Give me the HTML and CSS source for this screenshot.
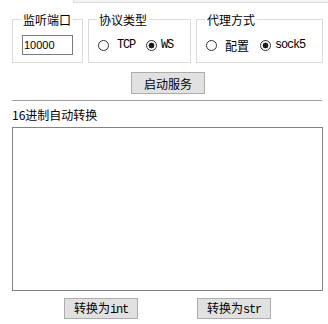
FILE: index.html
```html
<!DOCTYPE html>
<html lang="zh-CN">
<head>
<meta charset="utf-8">
<title>代理服务</title>
<link rel="stylesheet" href="styles.css">
</head>
<body>
<div class="topedge"></div>
<div class="groups">
  <fieldset class="group g1">
    <legend>监听端口</legend>
    <div class="row"><input class="port" type="text" value="10000"></div>
  </fieldset>
  <fieldset class="group g2">
    <legend>协议类型</legend>
    <div class="row">
      <label class="opt opt-a"><input type="radio" name="proto"><span class="mono">TCP</span></label>
      <label class="opt"><input type="radio" name="proto" checked><span class="mono">WS</span></label>
    </div>
  </fieldset>
  <fieldset class="group g3">
    <legend>代理方式</legend>
    <div class="row">
      <label class="opt opt-a"><input type="radio" name="mode"><span>配置</span></label>
      <label class="opt"><input type="radio" name="mode" checked><span class="mono">sock5</span></label>
    </div>
  </fieldset>
</div>
<div class="start-row"><button class="btn start">启动服务</button></div>
<hr class="sep">
<div class="label">16进制自动转换</div>
<textarea class="hex"></textarea>
<div class="actions">
  <button class="btn act">转换为<span class="mono">int</span></button>
  <button class="btn act">转换为<span class="mono">str</span></button>
</div>
</body>
</html>
```
FILE: styles.css
```css
html, body {
  margin: 0;
  padding: 0;
  background: #ffffff;
}
body {
  width: 328px;
  height: 324px;
  overflow: hidden;
  font-family: "Noto Sans CJK SC", "Liberation Sans", sans-serif;
  font-size: 12px;
  line-height: 15px;
  color: #000;
}
.mono {
  font-family: "Liberation Mono", "Noto Sans CJK SC", monospace;
  font-size: 12px;
  letter-spacing: -1.2px;
}
.topedge {
  margin-left: 73px;
  height: 2px;
  background: #f4f4f4;
  border-left: 1px solid #dcdcdc;
  border-bottom: 1px solid #dcdcdc;
}
.groups {
  display: flex;
  gap: 5px;
  margin-top: 9px;
  padding-left: 12px;
}
.group {
  margin: 0;
  min-width: 0;
  padding: 8px 4px 7px 9px;
  border: 1px solid #dcdcdc;
  box-sizing: border-box;
}
.g1 { width: 71px; }
.g2 { width: 103px; }
.g3 { width: 127px; }
.group legend {
  padding: 0 2px;
  margin-left: -1px;
  line-height: 15px;
  font-size: 12px;
}
.row {
  display: flex;
  align-items: center;
  gap: 11px;
  height: 20px;
}
.port {
  box-sizing: border-box;
  width: 51px;
  height: 20px;
  margin: 0;
  padding: 0 0 0 1px;
  border: 1px solid #7a7a7a;
  font-family: "Liberation Sans", sans-serif;
  font-size: 11px;
  color: #000;
  outline: none;
}
.opt {
  display: flex;
  align-items: center;
  gap: 4px;
  white-space: nowrap;
}
.opt-a { gap: 8px; }
.opt input {
  appearance: none;
  -webkit-appearance: none;
  box-sizing: border-box;
  width: 11px;
  height: 11px;
  margin: 0;
  border: 1px solid #333;
  border-radius: 50%;
  background: #fff;
}
.opt input:checked {
  background: radial-gradient(circle, #1a1a1a 0, #1a1a1a 2.6px, #fff 3.2px);
}
.btn {
  box-sizing: border-box;
  margin: 0;
  padding: 0;
  background: #e1e1e1;
  border: 1px solid #adadad;
  border-radius: 0;
  font-family: "Noto Sans CJK SC", sans-serif;
  font-size: 12px;
  line-height: 15px;
  color: #000;
}
.start-row {
  padding-left: 131px;
  margin-top: 9px;
  height: 22px;
}
.start {
  width: 74px;
  height: 22px;
}
.sep {
  margin: 6px 6px 0 12px;
  height: 0;
  border: 0;
  border-top: 1px solid #a0a0a0;
}
.label {
  margin: 6px 0 0 12px;
  height: 15px;
  font-size: 12px;
}
.hex {
  display: block;
  box-sizing: border-box;
  margin: 5px 0 0 12px;
  width: 311px;
  height: 164px;
  border: 1px solid #828282;
  resize: none;
  outline: none;
  padding: 0;
}
.actions {
  display: flex;
  gap: 59px;
  margin-top: 7px;
  padding-left: 64px;
}
.act {
  width: 74px;
  height: 21px;
}
```
